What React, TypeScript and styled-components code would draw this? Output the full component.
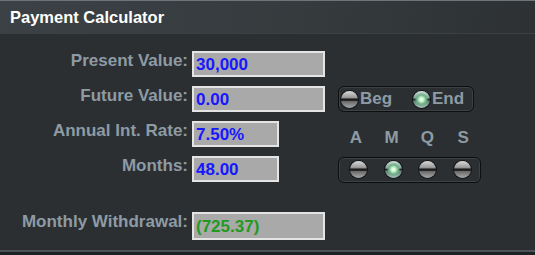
import React, { useState } from 'react';
import styled, { createGlobalStyle } from 'styled-components';

const GlobalStyle = createGlobalStyle`
  html, body {
    margin: 0;
    padding: 0;
    background: #1f2224;
  }
  body {
    font-family: "Liberation Sans", Arial, sans-serif;
  }
`;

const Window = styled.div`
  width: 535px;
  height: 255px;
  background: #1f2224;
  overflow: hidden;
`;

const Panel = styled.div`
  height: 252px;
  background: #2b2f32;
  border-bottom: 2px solid #4d5256;
  box-sizing: border-box;
`;

const Header = styled.div`
  height: 34px;
  box-sizing: border-box;
  padding: 6px 0 0 10px;
  border-top: 1px solid #6e7479;
  border-bottom: 1px solid #3b4043;
  background: linear-gradient(100deg, #3b4145 0%, #363b3e 55%, #2d3134 100%);
  color: #ffffff;
  font-size: 16.5px;
  font-weight: bold;
  line-height: 20px;
`;

const Body = styled.div`
  display: grid;
  grid-template-columns: 190px 133px 143px;
  grid-template-rows: 26px 26px 26px 27px 28px;
  row-gap: 9px;
  padding-top: 17px;
`;

const Label = styled.div<{ $row: number }>`
  grid-column: 1;
  grid-row: ${(p) => p.$row};
  justify-self: end;
  align-self: start;
  padding-right: 2px;
  color: #8e9ba4;
  font-size: 17px;
  font-weight: bold;
  line-height: 19px;
`;

const LastLabel = styled(Label)`
  margin-top: 20px;
`;

const Field = styled.div<{ $row: number; $wide?: boolean; $tone?: 'blue' | 'green' }>`
  grid-column: 2;
  grid-row: ${(p) => p.$row};
  width: ${(p) => (p.$wide ? '133px' : '87px')};
  height: 26px;
  box-sizing: border-box;
  margin-left: 2px;
  border: 2px solid #e4e4e4;
  background: #a9a9a9;
  padding: 1px 0 0 2px;
  display: flex;
  align-items: center;
  color: ${(p) => (p.$tone === 'green' ? '#229a22' : '#1717ff')};
  font-size: 17px;
  font-weight: bold;
`;

const LastField = styled(Field)`
  margin-top: 20px;
  height: 28px;
`;

const RightCell = styled.div<{ $row: number }>`
  grid-column: 3;
  grid-row: ${(p) => p.$row};
  padding-left: 15px;
  display: flex;
  align-items: center;
`;

const Group = styled.div`
  width: 143px;
  height: 26px;
  box-sizing: border-box;
  border: 1px solid #0c0e0f;
  box-shadow: inset 0 0 0 1px #3d4245;
  border-radius: 6px;
  display: flex;
  align-items: center;
  padding-left: 2px;
`;

const Option = styled.div<{ $width: number }>`
  width: ${(p) => p.$width}px;
  display: flex;
  align-items: center;
  gap: 2px;
  color: #8e9ba4;
  font-size: 17px;
  font-weight: bold;
  cursor: pointer;
`;

const Letters = styled.div`
  width: 143px;
  display: flex;
  align-self: end;
  margin-bottom: -1px;
`;

const Letter = styled.div`
  width: 36px;
  text-align: center;
  color: #8e9ba4;
  font-size: 17px;
  font-weight: bold;
`;

const Knob = styled.span<{ $on?: boolean }>`
  width: 17px;
  height: 17px;
  border-radius: 50%;
  flex: none;
  box-shadow: 0 0 0 1px #141617;
  background: ${(p) =>
    p.$on
      ? `radial-gradient(circle at 50% 50%, #ffffff 0%, #c6f5c6 18%, #6fb08a 38%, transparent 60%),
         linear-gradient(to bottom, #cfe0da 0%, #86a79a 40%, #1b2422 50%, #5e7f73 60%, #a9c4ba 100%)`
      : `linear-gradient(to bottom, #d9d9d9 0%, #9a9a9a 38%, #222 48%, #111 54%, #6c6c6c 62%, #a8a8a8 100%)`};
`;

const Period = styled.div`
  width: 36px;
  display: flex;
  justify-content: center;
  cursor: pointer;
`;

export default function App() {
  const [timing, setTiming] = useState<'beg' | 'end'>('end');
  const [period, setPeriod] = useState('M');
  const periods = ['A', 'M', 'Q', 'S'];

  return (
    <>
      <GlobalStyle />
      <Window>
        <Panel>
          <Header>Payment Calculator</Header>
          <Body>
            <Label $row={1}>Present Value:</Label>
            <Field $row={1} $wide>30,000</Field>

            <Label $row={2}>Future Value:</Label>
            <Field $row={2} $wide>0.00</Field>
            <RightCell $row={2}>
              <Group>
                <Option $width={72} onClick={() => setTiming('beg')}>
                  <Knob $on={timing === 'beg'} />Beg
                </Option>
                <Option $width={60} onClick={() => setTiming('end')}>
                  <Knob $on={timing === 'end'} />End
                </Option>
              </Group>
            </RightCell>

            <Label $row={3}>Annual Int. Rate:</Label>
            <Field $row={3}>7.50%</Field>
            <RightCell $row={3}>
              <Letters>
                {periods.map((p) => (
                  <Letter key={p}>{p}</Letter>
                ))}
              </Letters>
            </RightCell>

            <Label $row={4}>Months:</Label>
            <Field $row={4}>48.00</Field>
            <RightCell $row={4}>
              <Group>
                {periods.map((p) => (
                  <Period key={p} onClick={() => setPeriod(p)}>
                    <Knob $on={period === p} />
                  </Period>
                ))}
              </Group>
            </RightCell>

            <LastLabel $row={5}>Monthly Withdrawal:</LastLabel>
            <LastField $row={5} $wide $tone="green">(725.37)</LastField>
          </Body>
        </Panel>
      </Window>
    </>
  );
}
